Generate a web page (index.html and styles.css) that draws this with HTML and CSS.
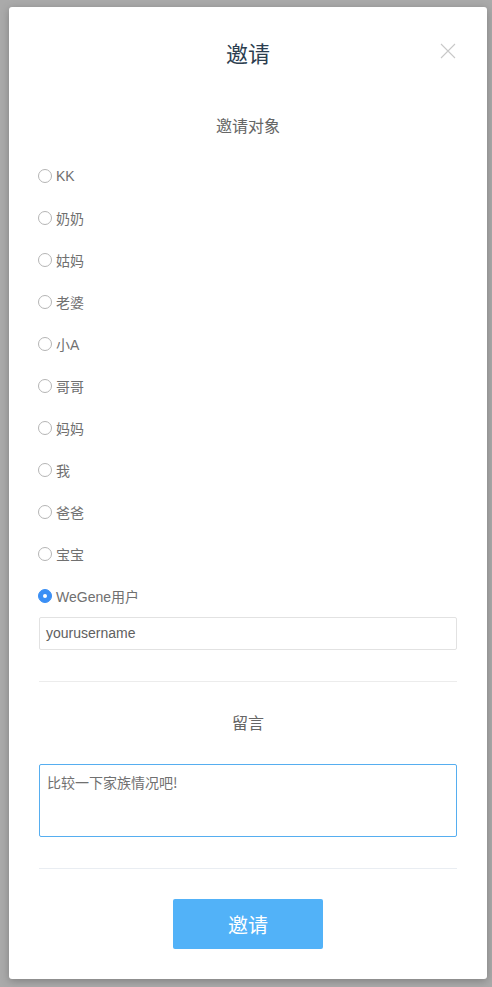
FILE: index.html
```html
<!DOCTYPE html>
<html lang="zh">
<head>
<meta charset="utf-8">
<link rel="stylesheet" href="styles.css">
</head>
<body>
<div class="modal">
  <div class="header">
    <h1 class="title">邀请</h1>
    <span class="close" aria-label="close">
      <svg width="16" height="16" viewBox="0 0 16 16"><path d="M1 1L15 15M15 1L1 15" stroke="#c8c8c8" stroke-width="1.1" fill="none"/></svg>
    </span>
  </div>
  <div class="section-title targets-title">邀请对象</div>
  <div class="options">
    <label class="option"><span class="radio"></span><span>KK</span></label>
    <label class="option"><span class="radio"></span><span>奶奶</span></label>
    <label class="option"><span class="radio"></span><span>姑妈</span></label>
    <label class="option"><span class="radio"></span><span>老婆</span></label>
    <label class="option"><span class="radio"></span><span>小A</span></label>
    <label class="option"><span class="radio"></span><span>哥哥</span></label>
    <label class="option"><span class="radio"></span><span>妈妈</span></label>
    <label class="option"><span class="radio"></span><span>我</span></label>
    <label class="option"><span class="radio"></span><span>爸爸</span></label>
    <label class="option"><span class="radio"></span><span>宝宝</span></label>
    <label class="option"><span class="radio checked"></span><span>WeGene用户</span></label>
  </div>
  <div class="input">yourusername</div>
  <hr class="divider first">
  <div class="section-title msg-title">留言</div>
  <div class="textarea">比较一下家族情况吧!</div>
  <hr class="divider second">
  <div class="actions"><button class="btn">邀请</button></div>
</div>
</body>
</html>
```
FILE: styles.css
```css
* { box-sizing: border-box; }
html, body { margin: 0; padding: 0; }
body {
  background: #aaaaaa;
  font-family: "Liberation Sans", "Noto Sans CJK SC", sans-serif;
  height: 987px;
  overflow: hidden;
}
.modal {
  margin: 7px 0 0 9px;
  width: 478px;
  height: 972px;
  background: #fff;
  border-radius: 3px;
  box-shadow: 0 2px 8px rgba(0,0,0,0.25);
  padding: 0 30px;
}
.header {
  position: relative;
  padding-top: 30px;
  text-align: center;
}
.title {
  margin: 0;
  font-size: 22px;
  line-height: 30px;
  font-weight: normal;
  color: #2c3e50;
  font-family: "Noto Sans CJK SC", sans-serif;
}
.close {
  position: absolute;
  right: 1px;
  top: 36px;
  width: 16px;
  height: 16px;
  display: block;
}
.close svg { display: block; }
.section-title {
  text-align: center;
  font-size: 16px;
  line-height: 24px;
  color: #666;
  font-family: "Noto Sans CJK SC", sans-serif;
}
.targets-title { margin-top: 46px; }
.options { margin-top: 18px; }
.option {
  display: flex;
  align-items: center;
  height: 42px;
  font-size: 14px;
  color: #707070;
  gap: 4px;
  margin-left: -1px;
}
.radio {
  width: 14px;
  height: 14px;
  border-radius: 50%;
  border: 1px solid #b5b5b5;
  background: #fff;
  flex: none;
  position: relative;
}
.radio.checked {
  background: #3a8ff5;
  border-color: #3a8ff5;
}
.radio.checked::after {
  content: "";
  position: absolute;
  width: 4px;
  height: 4px;
  border-radius: 50%;
  background: #fff;
  left: 4px;
  top: 4px;
}
.input {
  height: 33px;
  border: 1px solid #e2e2e2;
  border-radius: 2px;
  padding-left: 6px;
  font-size: 14px;
  line-height: 31px;
  color: #606060;
}
.divider {
  border: 0;
  border-top: 1px solid #ececec;
  margin: 0;
}
.divider.first { margin-top: 31px; }
.msg-title { margin-top: 28px; }
.textarea {
  margin-top: 30px;
  height: 73px;
  border: 1px solid #56aef0;
  border-radius: 2px;
  padding: 7px 7px;
  font-size: 14px;
  line-height: 20px;
  color: #707070;
  font-family: "Noto Sans CJK SC", sans-serif;
}
.divider.second { margin-top: 31px; border-top-color: #e9edf2; }
.actions {
  margin-top: 30px;
  display: flex;
  justify-content: center;
}
.btn {
  width: 150px;
  height: 50px;
  border: 0;
  border-radius: 2px;
  background: #52b2f8;
  color: #fff;
  font-size: 20px;
  font-family: "Noto Sans CJK SC", sans-serif;
}
```
